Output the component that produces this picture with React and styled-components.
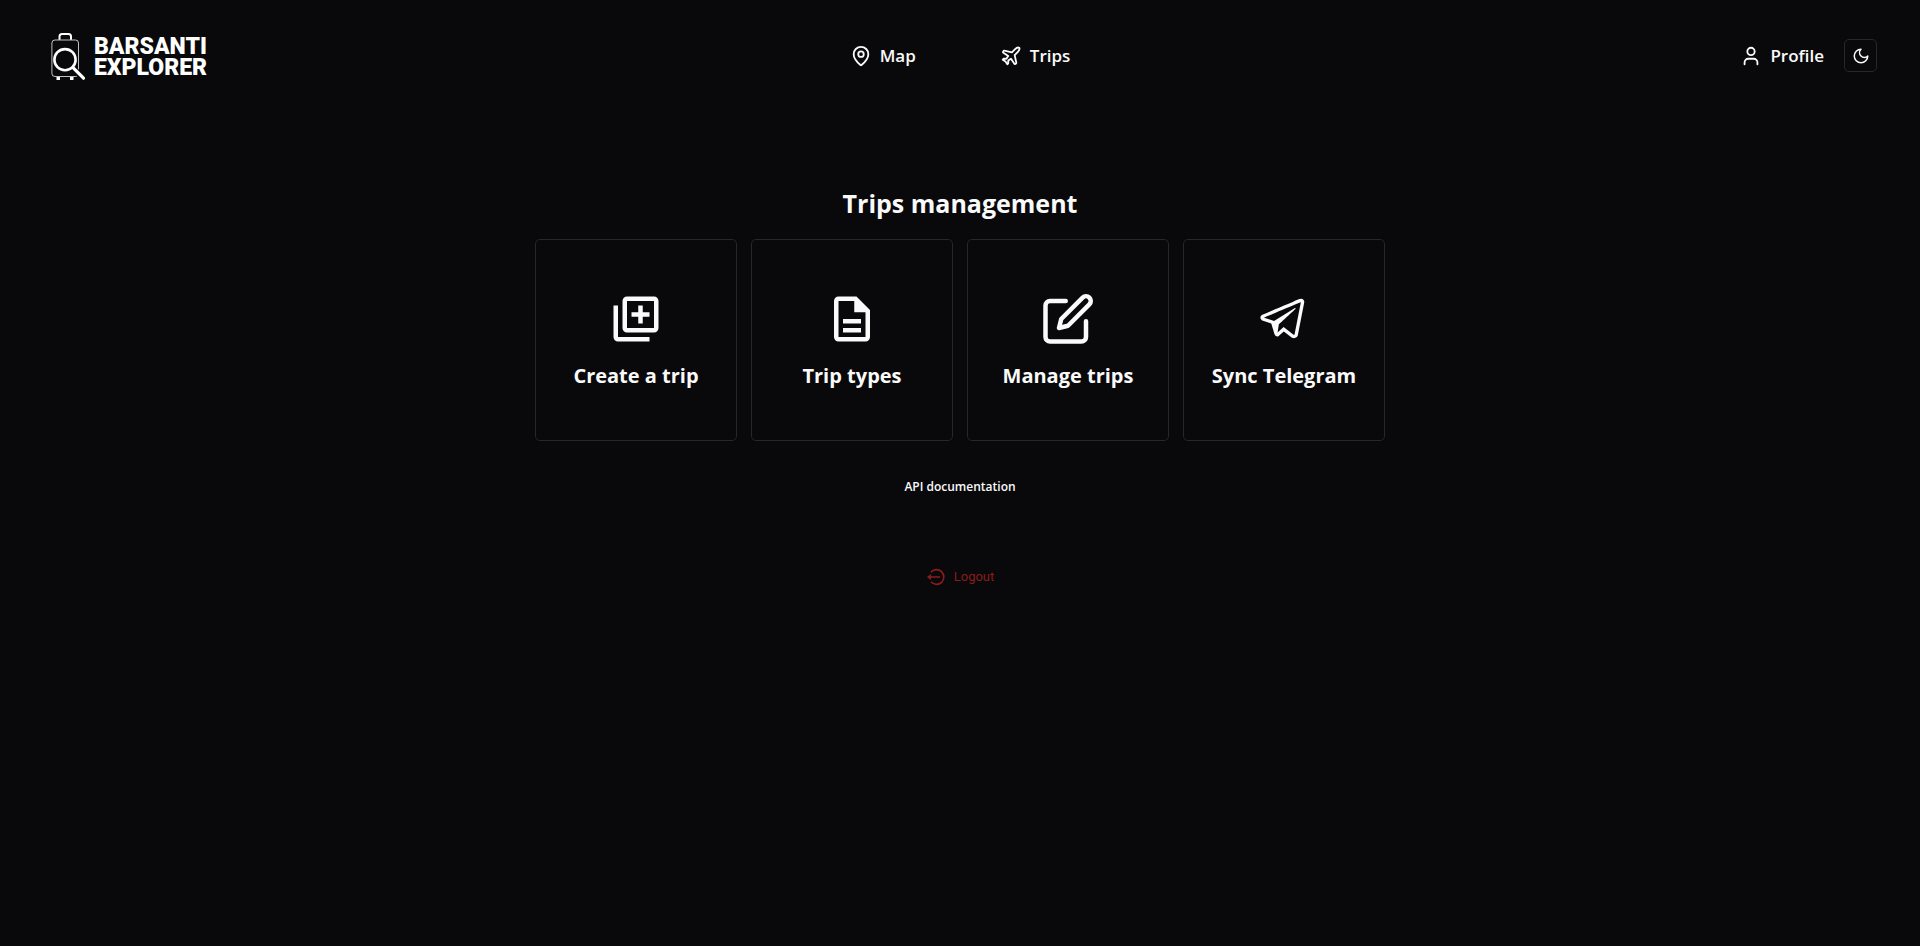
import React from "react";
import styled, { createGlobalStyle } from "styled-components";
import { LuMapPin, LuPlane, LuUser } from "react-icons/lu";
import { MdOutlineLibraryAdd, MdOutlineDescription } from "react-icons/md";
import { FiEdit } from "react-icons/fi";
import { LiaTelegramPlane } from "react-icons/lia";

const GlobalStyle = createGlobalStyle`
  *, *::before, *::after { box-sizing: border-box; }
  body {
    margin: 0;
    background: #09090b;
    color: #fafafa;
    font-family: "Segoe UI", "Open Sans", sans-serif;
  }
`;

const Header = styled.header`
  display: grid;
  grid-template-columns: 1fr auto 1fr;
  align-items: center;
  height: 111px;
  padding: 0 43px;
`;

const Brand = styled.a`
  display: inline-flex;
  align-items: center;
  justify-self: start;
  gap: 8px;
  padding-left: 7px;
  color: #fff;
  text-decoration: none;
`;

const BrandName = styled.span`
  padding-top: 2px;
  font: 900 23px/21px Roboto, sans-serif;
  text-transform: uppercase;
`;

const Nav = styled.nav`
  display: flex;
  gap: 84px;
`;

const Actions = styled.div`
  display: flex;
  justify-self: end;
  align-items: center;
  gap: 20px;
`;

const NavLink = styled.a`
  display: inline-flex;
  align-items: center;
  gap: 8px;
  color: inherit;
  font-size: 17px;
  font-weight: 600;
  line-height: 24px;
  text-decoration: none;

  svg { width: 22px; height: 22px; }
`;

const ThemeButton = styled.button`
  display: grid;
  place-items: center;
  width: 33px;
  height: 33px;
  padding: 0;
  border: 1px solid #27272a;
  border-radius: 5px;
  background: transparent;
  color: inherit;
  cursor: pointer;
`;

const Main = styled.main`
  display: flex;
  flex-direction: column;
  align-items: center;
  padding: 72px 24px 24px;
`;

const Title = styled.h1`
  margin: 0 0 15px;
  font-size: 25px;
  font-weight: 700;
  line-height: 41px;
`;

const Cards = styled.div`
  display: flex;
  flex-wrap: wrap;
  justify-content: center;
  gap: 14px;
`;

const Card = styled.a`
  display: flex;
  flex-direction: column;
  align-items: center;
  justify-content: center;
  gap: 14px;
  width: 202px;
  height: 202px;
  padding-top: 3px;
  border: 1px solid #27272a;
  border-radius: 5px;
  color: inherit;
  font-size: 20px;
  font-weight: 700;
  line-height: 32px;
  text-decoration: none;

  svg { width: 54px; height: 54px; }
`;

const DocsLink = styled.a`
  margin-top: 36px;
  color: inherit;
  font-size: 12px;
  font-weight: 600;
  line-height: 20px;
  text-decoration: none;
`;

const LogoutButton = styled.button`
  display: inline-flex;
  align-items: center;
  gap: 8px;
  margin-top: 70px;
  padding: 0;
  border: 0;
  background: transparent;
  color: #8a1c1c;
  font: 400 13px/20px Roboto, sans-serif;
  cursor: pointer;
`;

function SuitcaseLogo() {
  return (
    <svg width="36" height="50" viewBox="0 0 36 50" fill="none" stroke="currentColor" aria-hidden="true">
      <path d="M9.500 8.700V5.500Q9.500 3 12 3H18.500Q21 3 21 5.500V8.700" strokeWidth="2" />
      <rect x="1.900" y="9" width="26.600" height="36.500" rx="3" strokeWidth="1" opacity=".75" />
      <path d="M23 37L33 47" stroke="#09090b" strokeWidth="6" />
      <circle cx="15" cy="28.700" r="10.600" strokeWidth="2.600" />
      <path d="M23 36.700L33.500 47.200" strokeWidth="3.200" strokeLinecap="round" />
      <path d="M6.500 47.500H10M20 47.500H23.500" strokeWidth="3" />
    </svg>
  );
}

function MoonIcon() {
  return (
    <svg width="18" height="18" viewBox="0 0 24 24" fill="none" stroke="currentColor" strokeWidth="2" strokeLinejoin="round" aria-hidden="true">
      <path d="M12 3a6 6 0 0 0 9 9 9 9 0 1 1-9-9Z" />
    </svg>
  );
}

function LogoutIcon() {
  return (
    <svg width="20" height="20" viewBox="0 0 20 20" fill="none" stroke="currentColor" strokeWidth="1.700" aria-hidden="true">
      <path d="M5 5.200A7.300 7.300 0 1 1 5 14.800M3 10H14" />
      <path d="M1 10L5 7V13Z" fill="currentColor" stroke="none" />
    </svg>
  );
}

const sections = [
  { label: "Create a trip", Icon: MdOutlineLibraryAdd },
  { label: "Trip types", Icon: MdOutlineDescription },
  { label: "Manage trips", Icon: FiEdit },
  { label: "Sync Telegram", Icon: LiaTelegramPlane },
];

export default function App() {
  return (
    <>
      <GlobalStyle />
      <Header>
        <Brand href="#">
          <SuitcaseLogo />
          <BrandName>Barsanti<br />Explorer</BrandName>
        </Brand>
        <Nav>
          <NavLink href="#map"><LuMapPin />Map</NavLink>
          <NavLink href="#trips"><LuPlane />Trips</NavLink>
        </Nav>
        <Actions>
          <NavLink href="#profile"><LuUser />Profile</NavLink>
          <ThemeButton type="button" aria-label="Toggle theme"><MoonIcon /></ThemeButton>
        </Actions>
      </Header>
      <Main>
        <Title>Trips management</Title>
        <Cards>
          {sections.map(({ label, Icon }) => (
            <Card href="#" key={label}><Icon />{label}</Card>
          ))}
        </Cards>
        <DocsLink href="#docs">API documentation</DocsLink>
        <LogoutButton type="button"><LogoutIcon />Logout</LogoutButton>
      </Main>
    </>
  );
}
